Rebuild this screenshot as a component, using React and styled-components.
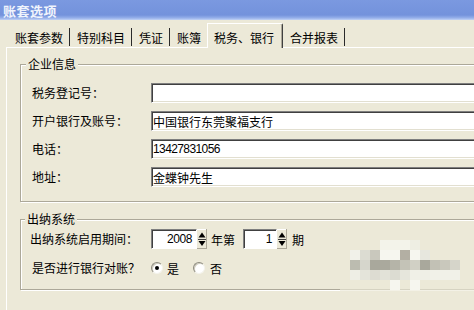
import React from "react";
import styled, { createGlobalStyle } from "styled-components";

const Global = createGlobalStyle`
  html, body { margin: 0; padding: 0; background: #ece9d8; overflow: hidden; }
  body { font-family: "Noto Sans CJK SC", "Liberation Sans", sans-serif; font-size: 12px; color: #000; }
  #root { width: 474px; height: 310px; }
`;

const Window = styled.div`
  position: relative;
  width: 474px;
  height: 310px;
  overflow: hidden;
  background: #ece9d8;
  display: flex;
  flex-direction: column;
`;

const TitleBar = styled.div`
  flex-shrink: 0;
  height: 20px;
  box-sizing: border-box;
  padding-left: 3px;
  display: flex;
  align-items: center;
  background: linear-gradient(to bottom, #7b99e0 0%, #7392dc 75%, #96b0ea 90%, #c2d3f5 100%);
  color: #f0f4fc;
  font-weight: bold;
  font-size: 13px;
  letter-spacing: 0.5px;
`;

const TabStrip = styled.div`
  flex-shrink: 0;
  display: flex;
  align-items: flex-end;
  height: 24px;
  margin-top: 3px;
  padding-left: 8px;
  position: relative;
  z-index: 2;
`;

const Tab = styled.div`
  position: relative;
  box-sizing: border-box;
  height: 19px;
  line-height: 19px;
  padding: 0 ${(p) => (p.$noSep ? 6 : 7)}px 0 7px;
  white-space: nowrap;
  &::after {
    content: "";
    display: ${(p) => (p.$noSep ? "none" : "block")};
    position: absolute;
    right: 0;
    top: 0;
    bottom: 1px;
    width: 1px;
    background: #2a2a2a;
  }
`;

const ActiveTab = styled.div`
  box-sizing: border-box;
  height: 25px;
  margin-bottom: -1px;
  padding: 4px 8px 0 6px;
  line-height: 19px;
  white-space: nowrap;
  background: #ece9d8;
  border-top: 1px solid #ffffff;
  border-left: 1px solid #ffffff;
  border-right: 1px solid #404040;
  box-shadow: inset -1px 0 0 #aca899;
  border-top-right-radius: 2px;
`;

const Panel = styled.div`
  flex: 1;
  margin-left: 6px;
  padding-left: 13px;
  border-top: 1px solid #ffffff;
  border-left: 1px solid #ffffff;
  position: relative;
  z-index: 1;
`;

const Group = styled.fieldset`
  box-sizing: border-box;
  width: 600px;
  margin: ${(p) => p.$top}px 0 0 0;
  padding: 0;
  border: 1px solid #aca899;
  box-shadow: inset 1px 1px 0 #ffffff, 1px 1px 0 #ffffff;
  min-inline-size: 0;
`;

const Legend = styled.legend`
  margin-left: ${(p) => p.$offset}px;
  padding: 0 2px;
  line-height: 14px;
  font-size: 12px;
  background: #ece9d8;
`;

const FieldGrid = styled.div`
  display: grid;
  grid-template-columns: ${(p) => p.$labelWidth}px 1fr;
  row-gap: ${(p) => p.$gap}px;
  align-items: center;
  padding: ${(p) => p.$pad};
`;

const Label = styled.div`
  white-space: nowrap;
  line-height: 16px;
  margin-left: ${(p) => p.$indent || 0}px;
`;

const TextBox = styled.div`
  box-sizing: border-box;
  height: 20px;
  padding-left: 1px;
  display: flex;
  align-items: center;
  background: #ffffff;
  border: 1px solid;
  border-color: #7f7f7f #ffffff #ffffff #7f7f7f;
  box-shadow: inset 1px 1px 0 #404040, inset -1px -1px 0 #e2dfd0;
  white-space: nowrap;
  letter-spacing: ${(p) => (p.$numeric ? "-0.6px" : "0")};
  font-family: ${(p) => (p.$numeric ? '"Liberation Sans", sans-serif' : "inherit")};
`;

const Inline = styled.div`
  display: flex;
  align-items: center;
  height: ${(p) => p.$h}px;
`;

const SpinWrap = styled.div`
  display: flex;
  align-items: center;
  height: 20px;
  margin-left: ${(p) => p.$ml || 0}px;
`;

const SpinField = styled.div`
  box-sizing: border-box;
  width: ${(p) => p.$w}px;
  height: 20px;
  padding-right: 4px;
  display: flex;
  align-items: center;
  justify-content: flex-end;
  background: #ffffff;
  border: 1px solid;
  border-color: #7f7f7f #ffffff #ffffff #7f7f7f;
  box-shadow: inset 1px 1px 0 #404040;
  font-family: "Liberation Sans", sans-serif;
  letter-spacing: -0.4px;
`;

const SpinButton = styled.svg`
  display: block;
  width: 10px;
  height: 20px;
  flex-shrink: 0;
`;

const Word = styled.span`
  margin-left: ${(p) => p.$ml}px;
  white-space: nowrap;
`;

const Radio = styled.span`
  box-sizing: border-box;
  width: 12px;
  height: 12px;
  border-radius: 50%;
  margin-left: ${(p) => p.$ml}px;
  display: inline-flex;
  align-items: center;
  justify-content: center;
  background: #ffffff;
  border: 1px solid;
  border-color: #8c8a7e #f4f3ec #f4f3ec #8c8a7e;
  box-shadow: inset 1px 1px 0 #cfccbd;
  &::after {
    content: "";
    display: ${(p) => (p.$checked ? "block" : "none")};
    width: 4px;
    height: 4px;
    border-radius: 50%;
    background: #000;
  }
`;

const Mosaic = styled.div`
  position: absolute;
  left: 350px;
  top: 240px;
  display: grid;
  grid-template-columns: repeat(11, 10px);
  grid-auto-rows: 10px;
  z-index: 5;
  pointer-events: none;
`;

const Cell = styled.div`
  background: ${(p) => p.$c || "transparent"};
`;

const Fade = styled.div`
  position: absolute;
  left: 340px;
  top: 287px;
  width: 134px;
  height: 4px;
  background: rgba(236, 233, 216, 0.65);
  z-index: 4;
`;

function Spin({ value, width, ml }) {
  return (
    <SpinWrap $ml={ml}>
      <SpinField $w={width}>{value}</SpinField>
      <SpinButton viewBox="0 0 10 20">
        <rect x="0" y="0" width="10" height="20" fill="#ece9d8" />
        <line x1="0" y1="0.5" x2="10" y2="0.5" stroke="#ffffff" />
        <line x1="9.5" y1="0" x2="9.5" y2="20" stroke="#aca899" />
        <line x1="0" y1="19.5" x2="10" y2="19.5" stroke="#aca899" />
        <polygon points="1.5,8.5 5,3.5 8.5,8.5" fill="#000" />
        <line x1="1" y1="10.5" x2="9" y2="10.5" stroke="#404040" />
        <polygon points="1.5,12 8.5,12 5,17" fill="#000" />
      </SpinButton>
    </SpinWrap>
  );
}

const mosaic = [
  [null, null, null, "#f3f3ea", "#f3f3ea", "#f3f3ea", "#eeeee3", null, null, null, null],
  ["#f1f1e9", "#dcdcd2", "#c9c8bd", "#f6f6ef", "#f6f6ef", "#b3afa3", "#f6f6ef", "#e7e7de", null, null, null],
  ["#bcbcb0", "#d6d6cc", "#a9a89c", "#aaa99d", "#b5b4a8", "#c4c3b7", "#d1d0c5", "#a9a89c", "#c2c1b5", "#c9c8bc", "#d6d5ca"],
  ["#eeeee5", "#e4e4da", "#dddcd2", "#e2e2d8", "#dcdcd2", "#e6e6dc", "#f0f0e7", "#efefe6", "#f1f1e8", "#f1f1e8", "#f1f1e8"],
  [null, null, null, null, "#f6f6ef", null, "#f6f6ef", null, null, null, null],
];

const tabs = ["账套参数", "特别科目", "凭证", "账簿"];

export default function App() {
  return (
    <>
      <Global />
      <Window>
        <TitleBar>账套选项</TitleBar>
        <TabStrip>
          {tabs.map((t, i) => (
            <Tab key={t} $noSep={i === tabs.length - 1}>
              {t}
            </Tab>
          ))}
          <ActiveTab>税务、银行</ActiveTab>
          <Tab>合并报表</Tab>
        </TabStrip>
        <Panel>
          <Group $top={9}>
            <Legend $offset={5}>企业信息</Legend>
            <FieldGrid $labelWidth={119} $gap={8} $pad="12px 0 14px 11px">
              <Label>税务登记号：</Label>
              <TextBox />
              <Label>开户银行及账号：</Label>
              <TextBox>中国银行东莞聚福支行</TextBox>
              <Label>电话：</Label>
              <TextBox $numeric>13427831056</TextBox>
              <Label>地址：</Label>
              <TextBox>金蝶钟先生</TextBox>
            </FieldGrid>
          </Group>
          <Group $top={10}>
            <Legend $offset={4}>出纳系统</Legend>
            <FieldGrid $labelWidth={121} $gap={11} $pad="3px 0 13px 9px">
              <Label>出纳系统启用期间：</Label>
              <Inline $h={20}>
                <Spin value="2008" width={46} />
                <Word $ml={4}>年第</Word>
                <Spin value="1" width={34} ml={8} />
                <Word $ml={5}>期</Word>
              </Inline>
              <Label $indent={2}>是否进行银行对账？</Label>
              <Inline $h={16}>
                <Radio $checked $ml={0} />
                <Word $ml={4}>是</Word>
                <Radio $ml={14} />
                <Word $ml={5}>否</Word>
              </Inline>
            </FieldGrid>
          </Group>
        </Panel>
        <Fade />
        <Mosaic>
          {mosaic.flat().map((c, i) => (
            <Cell key={i} $c={c} />
          ))}
        </Mosaic>
      </Window>
    </>
  );
}
